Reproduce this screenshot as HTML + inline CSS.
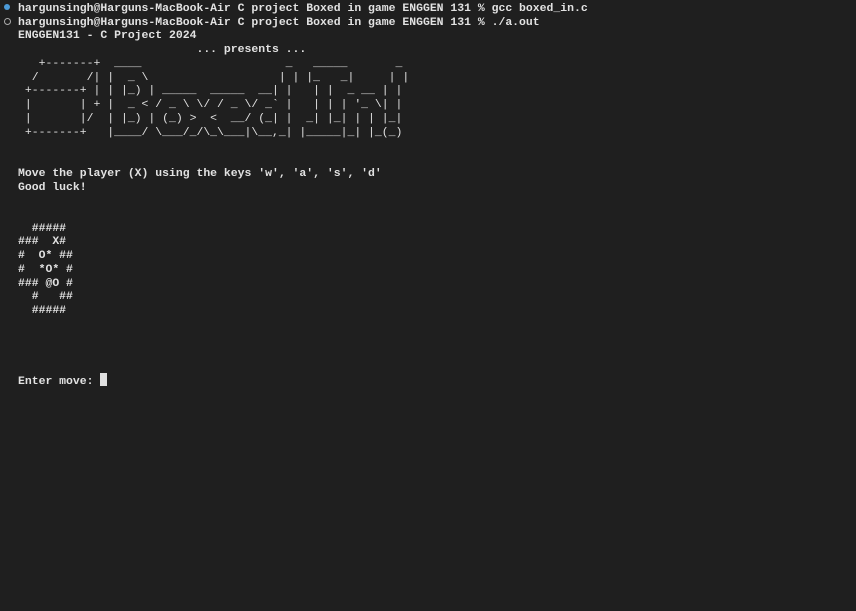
<!DOCTYPE html>
<html><head><meta charset="utf-8"><style>
html,body{margin:0;padding:0;background:#1f1f1f;width:856px;height:611px;overflow:hidden}
pre{margin:0;position:absolute;left:18px;top:2px;font-family:"Liberation Mono",monospace;font-size:11.45px;line-height:13.74px;color:#e2e2e2;font-weight:bold;white-space:pre}
.dot{position:absolute;left:4px;width:6px;height:6px;border-radius:50%}
.cur{display:inline-block;width:7px;height:13px;background:#e0e0e0;vertical-align:-2px}
.art{font-weight:normal}
</style></head><body>
<div class="dot" style="top:4px;background:#4b9ad8"></div>
<div class="dot" style="top:18px;border:1px solid #aaa;width:5px;height:5px"></div>
<pre>hargunsingh@Harguns-MacBook-Air C project Boxed in game ENGGEN 131 % gcc boxed_in.c
hargunsingh@Harguns-MacBook-Air C project Boxed in game ENGGEN 131 % ./a.out
ENGGEN131 - C Project 2024
                          ... presents ...
<span class="art">   +-------+  ____                     _   _____       _
  /       /| |  _ \                   | | |_   _|     | |
 +-------+ | | |_) | _____  _____  __| |   | |  _ __ | |
 |       | + |  _ &lt; / _ \ \/ / _ \/ _` |   | | | '_ \| |
 |       |/  | |_) | (_) &gt;  &lt;  __/ (_| |  _| |_| | | |_|
 +-------+   |____/ \___/_/\_\___|\__,_| |_____|_| |_(_)</span>


Move the player (X) using the keys 'w', 'a', 's', 'd'
Good luck!


  #####
###  X#
#  O* ##
#  *O* #
### @O #
  #   ##
  #####




Enter move: <span class="cur"></span></pre>
</body></html>
